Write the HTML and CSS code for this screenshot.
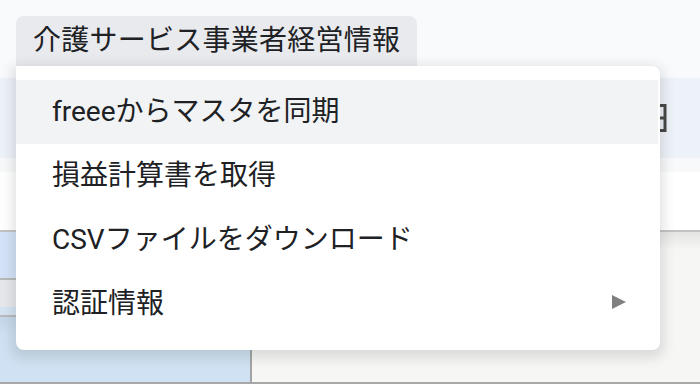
FILE: index.html
```html
<!DOCTYPE html>
<html lang="ja">

<head>
    <meta charset="UTF-8">
    <title>介護サービス事業者経営情報</title>
    <link rel="stylesheet" href="styles.css">
</head>

<body>
    <div class="menubar">
        <span class="menu-tab">介護サービス事業者経営情報</span>
    </div>
    <div class="toolbar">
        <svg class="tool-icon" width="30" height="30" viewBox="0 0 30 30">
            <rect x="3" y="2.5" width="24" height="25" fill="none" stroke="#444" stroke-width="3"/>
            <line x1="3" y1="15" x2="27" y2="15" stroke="#444" stroke-width="3"/>
        </svg>
    </div>
    <div class="toolbar-gap"></div>
    <div class="formula-bar"></div>
    <div class="grid">
        <div class="grid-left">
            <div class="band band-blue"></div>
            <div class="band band-gray"></div>
            <div class="band band-light"></div>
            <div class="band band-cell"></div>
        </div>
        <div class="grid-right"></div>
    </div>

    <!-- Dropdown under the custom menu -->
    <div class="dropdown">
        <div class="menu-item active">freeeからマスタを同期</div>
        <div class="menu-item">損益計算書を取得</div>
        <div class="menu-item">CSVファイルをダウンロード</div>
        <div class="menu-item">認証情報<span class="submenu-arrow"></span></div>
    </div>
</body>

</html>
```

FILE: styles.css
```css
body {
    margin: 0;
    font-family: Roboto, "Noto Sans CJK JP", sans-serif;
    color: #202124;
    background: #f9fafb;
    overflow: hidden;
    height: 384px;
}

.menubar {
    height: 78px;
    padding: 16px 0 0 16px;
    box-sizing: border-box;
    background: #f9fafc;
}

.menu-tab {
    display: inline-block;
    height: 50px;
    line-height: 50px;
    padding: 0 17px 0 17px;
    font-size: 28px;
    letter-spacing: 0.25px;
    background: #e8eaed;
    border-radius: 8px 8px 0 0;
    box-sizing: border-box;
}

.toolbar {
    height: 80px;
    background: #edf1f8;
    display: flex;
    justify-content: flex-end;
    align-items: center;
    padding-right: 32px;
    box-sizing: border-box;
}

.tool-icon {
    margin-top: -1px;
}

.toolbar-gap {
    height: 14px;
    background: #f8f9fb;
}

.formula-bar {
    height: 58px;
    background: #fff;
}

.grid {
    display: flex;
    height: 154px;
    border-top: 2px solid #c2c2c2;
    border-bottom: 2px solid #a8a8a8;
    box-sizing: border-box;
}

.grid-left {
    width: 250px;
    border-right: 2px solid #a3a3a3;
    display: flex;
    flex-direction: column;
}

.band-blue {
    height: 46px;
    background: #d4e2f8;
    border-bottom: 2px solid #b9b9b9;
}

.band-gray {
    height: 27px;
    background: #e7e8eb;
}

.band-light {
    height: 8px;
    background: #d6e3f2;
    border-bottom: 2px solid #b9b9b9;
}

.band-cell {
    flex: 1;
    background: linear-gradient(#c4d7ea, #cfe1f2 20px);
}

.grid-right {
    flex: 1;
    background: linear-gradient(#e4e5e3, #f6f7f5 18px);
}

.dropdown {
    position: absolute;
    left: 16px;
    top: 66px;
    width: 644px;
    padding: 14px 0 14px 0;
    background: #fff;
    border-radius: 0 8px 8px 8px;
    box-shadow: 0 4px 12px 4px rgba(60, 64, 67, 0.15);
    box-sizing: border-box;
}

.menu-item {
    position: relative;
    height: 64px;
    line-height: 64px;
    padding-left: 36px;
    margin-right: 2px;
    font-size: 28px;
    white-space: nowrap;
}

.menu-item.active {
    background: #f1f3f4;
}

.submenu-arrow {
    position: absolute;
    right: 32px;
    top: 23px;
    width: 0;
    height: 0;
    border-left: 14px solid #808080;
    border-top: 7px solid transparent;
    border-bottom: 7px solid transparent;
}
```
